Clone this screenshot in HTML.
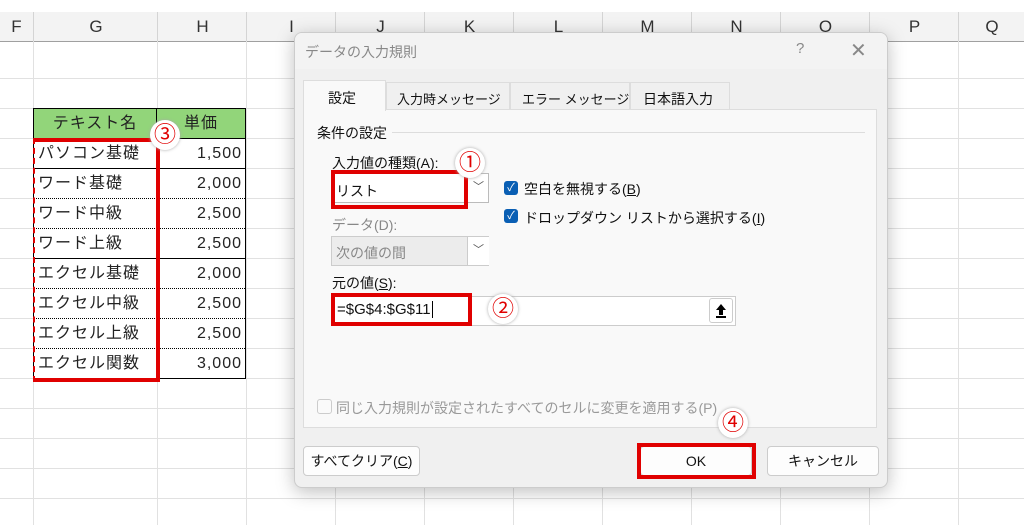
<!DOCTYPE html>
<html><head><meta charset="utf-8"><style>
body{margin:0;width:1024px;height:525px;overflow:hidden;background:#fff;font-family:"Liberation Sans","Noto Sans CJK JP",sans-serif;position:relative}
.a{position:absolute}
.hd{position:absolute;top:12px;height:29px;background:#f3f3f3;border-bottom:1px solid #a0a0a0;width:1024px;left:0}
.ct{position:absolute;top:12px;height:29px;line-height:29px;text-align:center;font-size:17px;color:#333;border-left:1px solid #d4d4d4}
.vl{position:absolute;top:41px;bottom:0;width:1px;background:#e1e1e1}
.hl{position:absolute;left:0;width:1024px;height:1px;background:#e1e1e1}
.cell{position:absolute;height:30px;line-height:30px;font-size:16px;color:#222;box-sizing:border-box;letter-spacing:1px}
.red{position:absolute;border:4px solid #e00000;box-sizing:border-box}
.num{position:absolute;width:30px;height:30px;border-radius:50%;background:#fff;box-shadow:0 0 3px #aaa;color:#e00000;font-size:22px;text-align:center;line-height:30px}
.chk{position:absolute;width:14px;height:14px;background:#0a5fb4;border-radius:3px;color:#fff;font-size:11px;line-height:14px;text-align:center}
.btn{position:absolute;height:30px;background:#fdfdfd;border:1px solid #ccc;border-radius:4px;box-sizing:border-box;text-align:center;line-height:28px;font-size:14px;color:#111}
.t{position:absolute;font-size:14px;color:#111;white-space:nowrap}
</style></head><body>
<div class="a" style="left:0;top:0;width:1024px;height:12px;background:#fff;border-bottom:1px solid #ccc"></div>
<div class="hd"></div>
<div class="ct" style="left:0;width:33px;border:0">F</div>
<div class="ct" style="left:33px;width:124px">G</div>
<div class="ct" style="left:157px;width:89px">H</div>
<div class="ct" style="left:246px;width:89px">I</div>
<div class="ct" style="left:335px;width:89px">J</div>
<div class="ct" style="left:424px;width:89px">K</div>
<div class="ct" style="left:513px;width:89px">L</div>
<div class="ct" style="left:602px;width:89px">M</div>
<div class="ct" style="left:691px;width:89px">N</div>
<div class="ct" style="left:780px;width:89px">O</div>
<div class="ct" style="left:869px;width:89px">P</div>
<div class="ct" style="left:958px;width:66px">Q</div>
<div class="vl" style="left:33px"></div><div class="vl" style="left:157px"></div><div class="vl" style="left:246px"></div><div class="vl" style="left:335px"></div><div class="vl" style="left:424px"></div><div class="vl" style="left:513px"></div><div class="vl" style="left:602px"></div><div class="vl" style="left:691px"></div><div class="vl" style="left:780px"></div><div class="vl" style="left:869px"></div><div class="vl" style="left:958px"></div>
<div class="hl" style="top:78px"></div><div class="hl" style="top:108px"></div><div class="hl" style="top:138px"></div><div class="hl" style="top:168px"></div><div class="hl" style="top:198px"></div><div class="hl" style="top:228px"></div><div class="hl" style="top:258px"></div><div class="hl" style="top:288px"></div><div class="hl" style="top:318px"></div><div class="hl" style="top:348px"></div><div class="hl" style="top:378px"></div><div class="hl" style="top:408px"></div><div class="hl" style="top:438px"></div><div class="hl" style="top:468px"></div><div class="hl" style="top:498px"></div>
<div class="a" style="left:33px;top:108px;width:213px;height:271px;border:1px solid #000;box-sizing:border-box;background:#fff"></div>
<div class="cell" style="left:34px;top:109px;width:123px;background:#92d57a;text-align:center;border-right:1px solid #000;border-bottom:1px solid #000">テキスト名</div>
<div class="cell" style="left:157px;top:109px;width:88px;background:#92d57a;text-align:center;border-bottom:1px solid #000">単価</div>
<div class="a" style="left:157px;top:138px;width:1px;height:240px;background:#000"></div>
<div class="a" style="left:34px;top:198px;width:211px;border-top:1px dotted #000"></div>
<div class="a" style="left:34px;top:228px;width:211px;border-top:1px dotted #000"></div>
<div class="a" style="left:34px;top:258px;width:211px;border-top:1px solid #000"></div>
<div class="a" style="left:34px;top:168px;width:211px;border-top:1px solid #000"></div>
<div class="a" style="left:34px;top:288px;width:211px;border-top:1px dotted #000"></div>
<div class="a" style="left:34px;top:318px;width:211px;border-top:1px dotted #000"></div>
<div class="a" style="left:34px;top:348px;width:211px;border-top:1px dotted #000"></div>
<div class="cell" style="left:38px;top:139px">パソコン基礎</div><div class="cell" style="left:158px;top:139px;width:84px;text-align:right">1,500</div>
<div class="cell" style="left:38px;top:169px">ワード基礎</div><div class="cell" style="left:158px;top:169px;width:84px;text-align:right">2,000</div>
<div class="cell" style="left:38px;top:199px">ワード中級</div><div class="cell" style="left:158px;top:199px;width:84px;text-align:right">2,500</div>
<div class="cell" style="left:38px;top:229px">ワード上級</div><div class="cell" style="left:158px;top:229px;width:84px;text-align:right">2,500</div>
<div class="cell" style="left:38px;top:259px">エクセル基礎</div><div class="cell" style="left:158px;top:259px;width:84px;text-align:right">2,000</div>
<div class="cell" style="left:38px;top:289px">エクセル中級</div><div class="cell" style="left:158px;top:289px;width:84px;text-align:right">2,500</div>
<div class="cell" style="left:38px;top:319px">エクセル上級</div><div class="cell" style="left:158px;top:319px;width:84px;text-align:right">2,500</div>
<div class="cell" style="left:38px;top:349px">エクセル関数</div><div class="cell" style="left:158px;top:349px;width:84px;text-align:right">3,000</div>
<div class="red" style="left:33px;top:138px;width:127px;height:244px;border-left-width:2px;border-left-style:dashed"></div>
<div class="num" style="left:150px;top:120px">③</div>
<div class="a" style="left:294px;top:32px;width:594px;height:456px;background:#f0f0f0;border-radius:8px;box-shadow:0 4px 18px rgba(0,0,0,.25);border:1px solid #ccc;box-sizing:border-box;overflow:hidden">
<div class="a" style="left:0;top:0;width:100%;height:36px;background:#f3f3f3"></div>
</div>
<div class="t" style="left:305px;top:42px;color:#888">データの入力規則</div>
<div class="t" style="left:796px;top:40px;color:#888;font-size:15px">?</div>
<div class="t" style="left:850px;top:38px;color:#888;font-size:20px">✕</div>
<div class="a" style="left:303px;top:109px;width:574px;height:319px;background:#f9f9f9;border:1px solid #ddd;box-sizing:border-box"></div>
<div class="a" style="left:303px;top:80px;width:83px;height:31px;background:#f9f9f9;border:1px solid #ddd;border-bottom:0;box-sizing:border-box"></div>
<div class="t" style="left:328px;top:88px">設定</div>
<div class="a" style="left:386px;top:82px;width:124px;height:27px;border:1px solid #ddd;border-bottom:0;box-sizing:border-box"></div>
<div class="t" style="left:397px;top:89px;font-size:13px">入力時メッセージ</div>
<div class="a" style="left:510px;top:82px;width:120px;height:27px;border:1px solid #ddd;border-bottom:0;box-sizing:border-box"></div>
<div class="t" style="left:522px;top:89px;font-size:13px">エラー メッセージ</div>
<div class="a" style="left:630px;top:82px;width:100px;height:27px;border:1px solid #ddd;border-bottom:0;box-sizing:border-box"></div>
<div class="t" style="left:643px;top:89px">日本語入力</div>
<div class="t" style="left:317px;top:123px">条件の設定</div>
<div class="a" style="left:392px;top:132px;width:473px;height:1px;background:#ddd"></div>
<div class="t" style="left:332px;top:153px">入力値の種類(A):</div>
<div class="a" style="left:331px;top:173px;width:158px;height:30px;background:#fff;border:1px solid #bbb;box-sizing:border-box"></div>
<div class="t" style="left:473px;top:178px;color:#555;font-size:11px">﹀</div>
<div class="red" style="left:331px;top:170px;width:137px;height:39px"></div>
<div class="t" style="left:336px;top:181px">リスト</div>
<div class="num" style="left:455px;top:148px">①</div>
<div class="chk" style="left:504px;top:181px">✓</div><div class="t" style="left:524px;top:179px">空白を無視する(<u>B</u>)</div>
<div class="chk" style="left:504px;top:209px">✓</div><div class="t" style="left:524px;top:208px">ドロップダウン リストから選択する(<u>I</u>)</div>
<div class="t" style="left:332px;top:215px;color:#888">データ(D):</div>
<div class="a" style="left:331px;top:236px;width:158px;height:30px;background:#ececec;border:1px solid #ccc;box-sizing:border-box"></div>
<div class="a" style="left:467px;top:237px;width:21px;height:28px;background:#fff;border-left:1px solid #ccc"></div>
<div class="t" style="left:473px;top:241px;color:#555;font-size:11px">﹀</div>
<div class="t" style="left:336px;top:243px;color:#888">次の値の間</div>
<div class="t" style="left:332px;top:273px">元の値(<u>S</u>):</div>
<div class="a" style="left:331px;top:296px;width:405px;height:30px;background:#fff;border:1px solid #ccc;box-sizing:border-box"></div>
<div class="a" style="left:709px;top:298px;width:24px;height:25px;background:#fff;border:1px solid #ccc;border-radius:3px;box-sizing:border-box">
<svg width="22" height="23" viewBox="0 0 22 23"><path d="M11 5 L6 11 H9 V16 H13 V11 H16 Z" fill="#000"/><rect x="6" y="17" width="10" height="2" fill="#000"/></svg></div>
<div class="red" style="left:331px;top:293px;width:141px;height:33px"></div>
<div class="t" style="left:337px;top:301px;font-size:15px">=$G$4:$G$11<span style="border-left:1px solid #000;margin-left:1px"></span></div>
<div class="num" style="left:488px;top:294px">②</div>
<div class="a" style="left:317px;top:399px;width:13px;height:13px;border:1px solid #ccc;border-radius:3px;background:#fafafa"></div>
<div class="t" style="left:336px;top:398px;color:#999">同じ入力規則が設定されたすべてのセルに変更を適用する(P)</div>
<div class="btn" style="left:303px;top:446px;width:117px">すべてクリア(<u>C</u>)</div>
<div class="btn" style="left:640px;top:446px;width:112px">OK</div>
<div class="red" style="left:637px;top:443px;width:119px;height:36px"></div>
<div class="num" style="left:718px;top:408px">④</div>
<div class="btn" style="left:767px;top:446px;width:112px">キャンセル</div>
</body></html>
